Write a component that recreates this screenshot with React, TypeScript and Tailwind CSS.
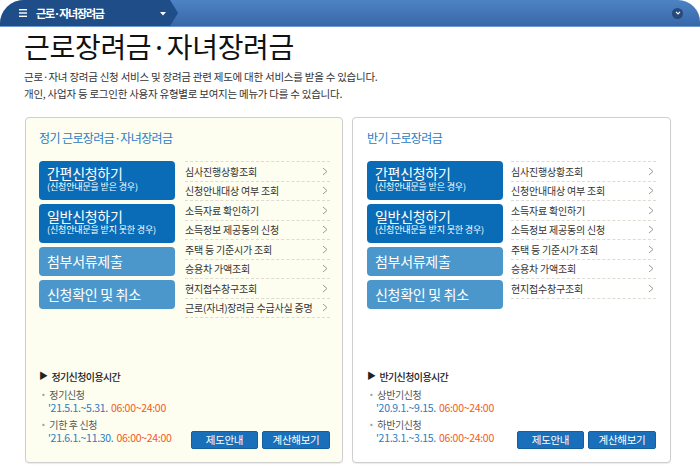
import React from "react";

const F = "font-['Noto_Sans_CJK_KR','Noto_Sans',sans-serif]";

function Chevron() {
  return (
    <svg width="6" height="9" viewBox="0 0 6 9" className="shrink-0">
      <polyline points="1,1 5,4.5 1,8" fill="none" stroke="#9a9a9a" strokeWidth="1" />
    </svg>
  );
}

type Card = {
  title: string;
  list: string[];
  heading: string;
  items: { label: string; date: string; time: string }[];
  wrap: string;
  gap: string;
};

function MainBtn({ title, sub, dark }: { title: string; sub?: string; dark: boolean }) {
  return (
    <div
      className={`rounded-[4px] pl-[8px] flex flex-col justify-center text-white ${
        dark ? "bg-[#0a6cb7] h-[39px] pb-[3px]" : "bg-[#4b97cb] h-[29px]"
      }`}
    >
      <div className="text-[14px] leading-[15px] tracking-[-0.3px]">{title}</div>
      {sub && <div className="text-[9px] leading-[12px] tracking-[-0.15px]">{sub}</div>}
    </div>
  );
}

function CardView({ c }: { c: Card }) {
  return (
    <div className={`${c.wrap} h-[346px] border border-[#cfcfcf] rounded-[4px] flex flex-col shadow-[0_1px_1px_rgba(0,0,0,0.08)]`}>
      <div className="pt-[12px] text-[12px] leading-[16px] tracking-[-0.6px] text-[#2b7bc0] whitespace-pre">{c.title}</div>
      <div className={`mt-[15px] grid grid-cols-[136px_1fr] ${c.gap}`}>
        <div className="flex flex-col gap-[4px]">
          <MainBtn title="간편신청하기" sub="(신청안내문을 받은 경우)" dark />
          <MainBtn title="일반신청하기" sub="(신청안내문을 받지 못한 경우)" dark />
          <MainBtn title="첨부서류제출" dark={false} />
          <MainBtn title="신청확인 및 취소" dark={false} />
        </div>
        <div className="border-t border-dashed border-[#dcdcd4]">
          {c.list.map((t) => (
            <div
              key={t}
              className="h-[19.5px] border-b border-dashed border-[#dcdcd4] flex items-center justify-between pr-[2px]"
            >
              <span className="text-[10px] tracking-[-0.2px] text-[#333] whitespace-nowrap">{t}</span>
              <Chevron />
            </div>
          ))}
        </div>
      </div>
      <div className="mt-auto pb-[13px] flex items-end justify-between">
        <div className="mb-[4px]">
          <div className="flex items-center h-[14px] text-[10px] tracking-[-0.6px] text-[#222] font-medium">
            <span className="text-[9px] mr-[4px]">▶</span>
            {c.heading}
          </div>
          {c.items.map((it, i) => (
            <div key={it.label} className={i === 0 ? "mt-[4px]" : "mt-[2px]"}>
              <div className="h-[14px] flex items-center text-[10px] tracking-[-0.4px] text-[#555]">
                <span className="text-[8px] text-[#999] ml-[3px] mr-[5px]">•</span>
                {it.label}
              </div>
              <div className="h-[14px] flex items-center pl-[9px] text-[10.5px] tracking-[-0.3px]">
                <span className="text-[#2b7bc0]">{it.date}</span>
                <span className="text-[#f25a1e] ml-[3px]">{it.time}</span>
              </div>
            </div>
          ))}
        </div>
        <div className="flex gap-[4px]">
          <div className="w-[67px] h-[18px] rounded-[2px] bg-[#1a6fba] border border-[#14609f] text-white text-[10.5px] tracking-[-0.3px] flex items-center justify-center">
            제도안내
          </div>
          <div className="w-[68px] h-[18px] rounded-[2px] bg-[#1a6fba] border border-[#14609f] text-white text-[10.5px] tracking-[-0.3px] flex items-center justify-center">
            계산해보기
          </div>
        </div>
      </div>
    </div>
  );
}

export default function App() {
  const left: Card = {
    title: "정기 근로장려금·자녀장려금",
    list: [
      "심사진행상황조회",
      "신청안내대상 여부 조회",
      "소득자료 확인하기",
      "소득정보 제공동의 신청",
      "주택 등 기준시가 조회",
      "승용차 가액조회",
      "현지접수창구조회",
      "근로(자녀)장려금 수급사실 증명",
    ],
    heading: "정기신청이용시간",
    items: [
      { label: "정기신청", date: "'21.5.1.~5.31.", time: "06:00~24:00" },
      { label: "기한 후 신청", date: "'21.6.1.~11.30.", time: "06:00~24:00" },
    ],
    wrap: "w-[318px] bg-[#fdfdf0] pl-[13px] pr-[12px]",
    gap: "gap-x-[10px]",
  };
  const right: Card = {
    title: "반기 근로장려금",
    list: [
      "심사진행상황조회",
      "신청안내대상 여부 조회",
      "소득자료 확인하기",
      "소득정보 제공동의 신청",
      "주택 등 기준시가 조회",
      "승용차 가액조회",
      "현지접수창구조회",
    ],
    heading: "반기신청이용시간",
    items: [
      { label: "상반기신청", date: "'20.9.1.~9.15.", time: "06:00~24:00" },
      { label: "하반기신청", date: "'21.3.1.~3.15.", time: "06:00~24:00" },
    ],
    wrap: "w-[319px] bg-white pl-[14px] pr-[14px]",
    gap: "gap-x-[8px]",
  };

  return (
    <div className={`${F} w-[700px] h-[473px] bg-white overflow-hidden`}>
      {/* top bar */}
      <div className="relative h-[27px] rounded-tl-[24px] rounded-tr-[22px] overflow-hidden bg-gradient-to-b from-[#4d83c3] to-[#3868a9] border-b border-[#6d9ad0] flex items-center">
        <div className="h-full w-[178px] bg-[#1e4d88] [clip-path:polygon(0_0,170px_0,178px_50%,170px_100%,0_100%)] flex items-center">
          <svg width="9" height="8" viewBox="0 0 9 8" className="ml-[19px]">
            <rect x="0" y="0" width="8" height="1.4" fill="#fff" />
            <rect x="0" y="3.3" width="8" height="1.4" fill="#fff" />
            <rect x="0" y="6.6" width="8" height="1.4" fill="#fff" />
          </svg>
          <span className="ml-[8px] text-white text-[11px] font-bold tracking-[-1.2px] leading-none">
            근로·자녀장려금
          </span>
          <svg width="6" height="4" viewBox="0 0 6 4" className="ml-[56px] mt-[1px]">
            <polygon points="0,0 6,0 3,3.5" fill="#fff" />
          </svg>
        </div>
        <div className="ml-auto mr-[17px] w-[11px] h-[11px] rounded-full bg-[#26497a] flex items-center justify-center">
          <svg width="6" height="4" viewBox="0 0 6 4">
            <polyline points="1,0.8 3,2.8 5,0.8" fill="none" stroke="#fff" strokeWidth="1.2" />
          </svg>
        </div>
      </div>

      <div className="pl-[24px]">
        <div className="mt-[1px] text-[28px] leading-[36px] tracking-[-0.3px] text-[#111]">근로장려금·자녀장려금</div>
        <div className="mt-[4px] text-[10.5px] leading-[17px] tracking-[-0.25px] text-[#333]">
          <div>근로·자녀 장려금 신청 서비스 및 장려금 관련 제도에 대한 서비스를 받을 수 있습니다.</div>
          <div>개인, 사업자 등 로그인한 사용자 유형별로 보여지는 메뉴가 다를 수 있습니다.</div>
        </div>
      </div>

      <div className="mt-[15px] pl-[25px] flex gap-[9px]">
        <CardView c={left} />
        <CardView c={right} />
      </div>
    </div>
  );
}
